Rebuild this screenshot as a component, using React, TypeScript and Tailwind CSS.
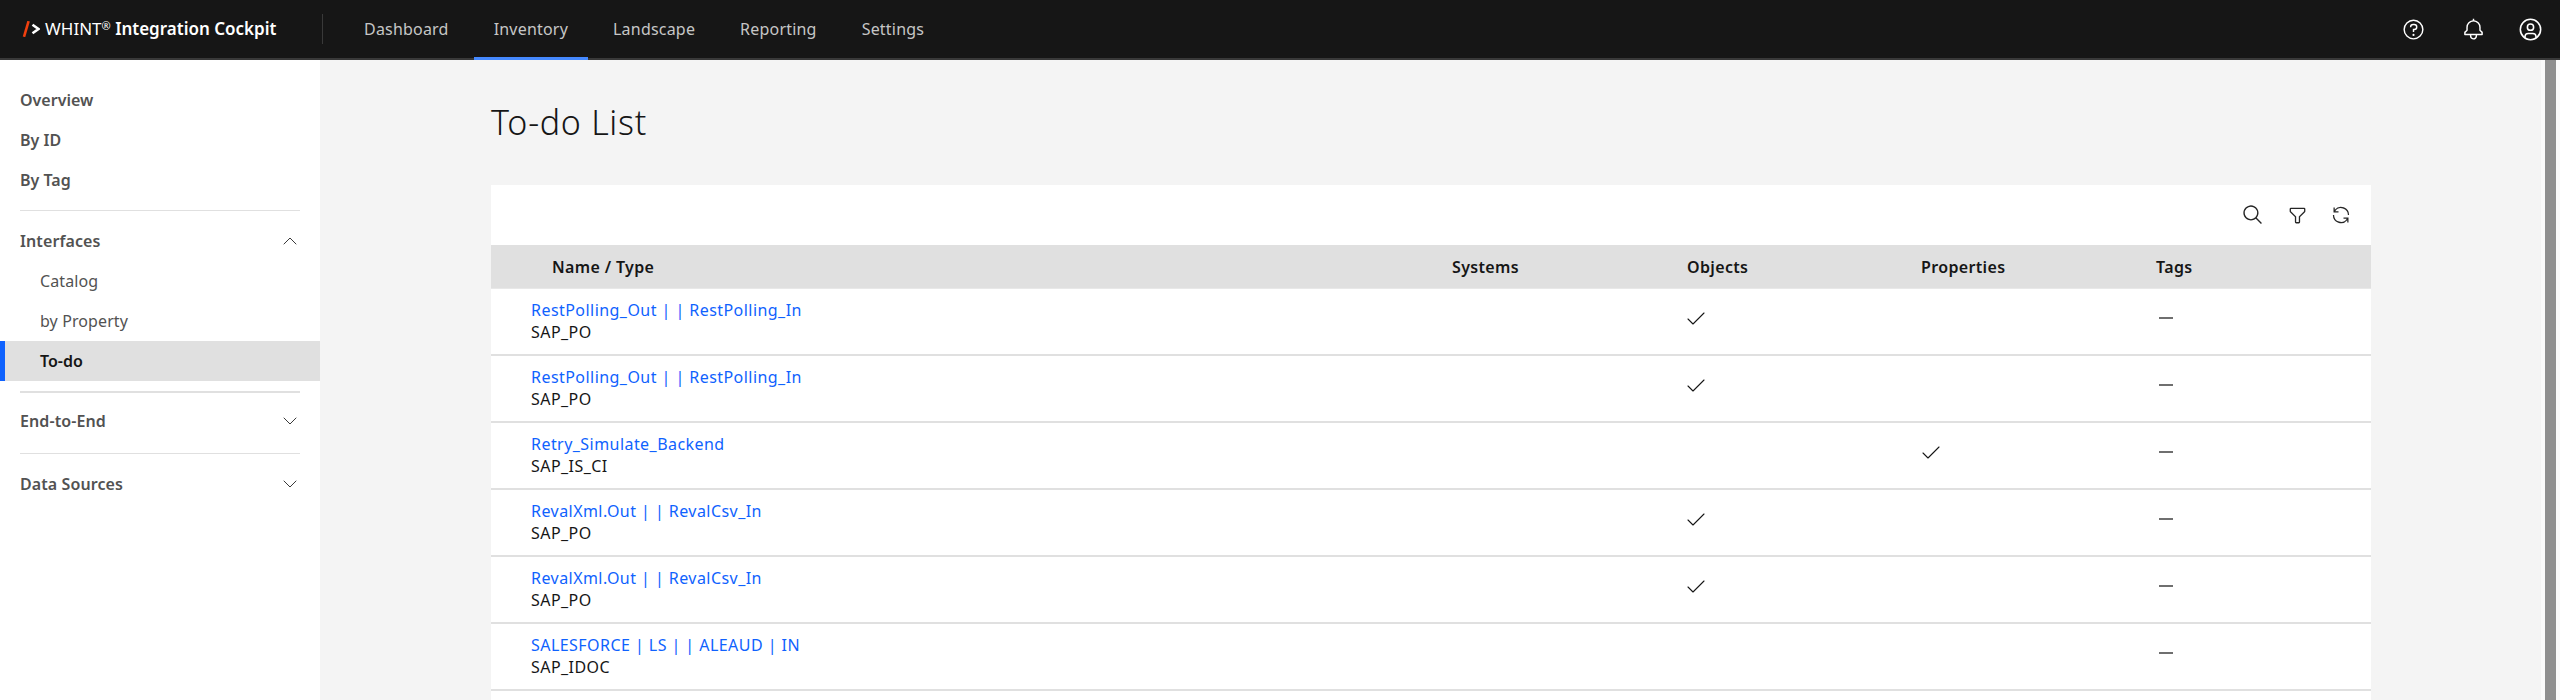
import { Check, ChevronDown, ChevronUp } from 'lucide-react';

const topNav = ['Dashboard', 'Inventory', 'Landscape', 'Reporting', 'Settings'];

const rows = [
  { name: 'RestPolling_Out | | RestPolling_In', type: 'SAP_PO', col: 'objects' },
  { name: 'RestPolling_Out | | RestPolling_In', type: 'SAP_PO', col: 'objects' },
  { name: 'Retry_Simulate_Backend', type: 'SAP_IS_CI', col: 'properties' },
  { name: 'RevalXml.Out | | RevalCsv_In', type: 'SAP_PO', col: 'objects' },
  { name: 'RevalXml.Out | | RevalCsv_In', type: 'SAP_PO', col: 'objects' },
  { name: 'SALESFORCE | LS | | ALEAUD | IN', type: 'SAP_IDOC', col: '' },
];

const gridCols = 'grid grid-cols-[961px_235px_234px_235px_1fr]';

function HelpIcon() {
  return (
    <svg width="23" height="23" viewBox="0 0 32 32" fill="#fff">
      <path d="M16,2A14,14,0,1,0,30,16,14,14,0,0,0,16,2Zm0,26A12,12,0,1,1,28,16,12,12,0,0,1,16,28Z" />
      <circle cx="16" cy="23.5" r="1.5" />
      <path d="M17,8H15.5A4.49,4.49,0,0,0,11,12.5V13h2v-.5A2.5,2.5,0,0,1,15.5,10H17a2.5,2.5,0,0,1,0,5H15v4.5h2V17a4.5,4.5,0,0,0,0-9Z" />
    </svg>
  );
}

function BellIcon() {
  return (
    <svg width="23" height="23" viewBox="0 0 32 32" fill="#fff">
      <path d="M28.7071,19.293,26,16.5859V13a10.0136,10.0136,0,0,0-9-9.9492V1H15V3.0508A10.0136,10.0136,0,0,0,6,13v3.5859L3.2929,19.293A1,1,0,0,0,3,20v3a1,1,0,0,0,1,1h7v.7768a5.152,5.152,0,0,0,4.5,5.1987A5.0057,5.0057,0,0,0,21,25V24h7a1,1,0,0,0,1-1V20A1,1,0,0,0,28.7071,19.293ZM19,25a3,3,0,0,1-6,0V24h6Zm8-3H5V20.4141L7.707,17.707A1,1,0,0,0,8,17V13a8,8,0,0,1,16,0v4a1,1,0,0,0,.293.707L27,20.4141Z" />
    </svg>
  );
}

function UserIcon() {
  return (
    <svg width="25" height="25" viewBox="0 0 32 32" fill="#fff">
      <path d="M16,8a5,5,0,1,0,5,5A5,5,0,0,0,16,8Zm0,8a3,3,0,1,1,3-3A3.0034,3.0034,0,0,1,16,16Z" />
      <path d="M16,2A14,14,0,1,0,30,16,14.0158,14.0158,0,0,0,16,2ZM10,26.3765V25a3.0033,3.0033,0,0,1,3-3h6a3.0033,3.0033,0,0,1,3,3v1.3765a11.8989,11.8989,0,0,1-12,0Zm13.9925-1.4507A5.0016,5.0016,0,0,0,19,20H13a5.0016,5.0016,0,0,0-4.9925,4.9258,12,12,0,1,1,15.985,0Z" />
    </svg>
  );
}

function SearchIcon() {
  return (
    <svg width="22" height="22" viewBox="0 0 32 32" fill="#262626">
      <path d="M29 27.5859l-7.5521-7.5521a11.0177 11.0177 0 1 0-1.4141 1.4141L27.5859 29ZM4 13a9 9 0 1 1 9 9A9.01 9.01 0 0 1 4 13Z" />
    </svg>
  );
}

function FilterIcon() {
  return (
    <svg width="21" height="21" viewBox="0 0 32 32" fill="#262626">
      <path d="M18,28H14a2,2,0,0,1-2-2V18.41L4.59,11A2,2,0,0,1,4,9.59V6A2,2,0,0,1,6,4H26a2,2,0,0,1,2,2V9.59A2,2,0,0,1,27.41,11L20,18.41V26A2,2,0,0,1,18,28ZM6,6V9.59l8,8V26h4V17.59l8-8V6Z" />
    </svg>
  );
}

function RefreshIcon() {
  return (
    <svg width="20" height="20" viewBox="0 0 32 32" fill="#262626">
      <path d="M12 10H6.78A11 11 0 0 1 27 16h2A13 13 0 0 0 6 7.68V4H4v8h8zM20 22h5.22A11 11 0 0 1 5 16H3a13 13 0 0 0 23 8.32V28h2v-8h-8z" />
    </svg>
  );
}

function SideHeading({ label, open }: { label: string; open?: boolean }) {
  const Icon = open ? ChevronUp : ChevronDown;
  return (
    <div className="flex h-10 items-center justify-between pl-5 pr-[18px] font-semibold tracking-[0.1px] text-[#525252]">
      <span>{label}</span>
      <Icon className="h-6 w-6 text-[#393939]" strokeWidth={1} />
    </div>
  );
}

export default function App() {
  return (
    <div className="flex h-[700px] w-[2560px] flex-col overflow-hidden bg-[#f4f4f4] text-base text-[#161616] [font-family:'Noto_Sans',sans-serif]">
      {/* Top bar */}
      <header className="flex h-[60px] shrink-0 items-center border-b-2 border-[#393939] bg-[#161616]">
        <div className="flex w-[322px] items-center pl-[22px] text-white">
          <svg width="18" height="16" viewBox="0 0 18 16" fill="none" strokeWidth="2.6">
            <path d="M6.6 .2L2 15.8" stroke="#f0400f" />
            <path d="M10.5 3.8l6 4.2-6 4.2" stroke="#fff" />
          </svg>
          <span className="ml-[5px] whitespace-nowrap text-[17px]">
            WHINT<sup className="text-[11px]">®</sup> <span className="font-semibold">Integration Cockpit</span>
          </span>
        </div>
        <div className="h-[30px] w-px bg-[#393939]" />
        <nav className="ml-[21px] flex h-full gap-[5px] tracking-[0.2px]">
          {topNav.map((item) => (
            <div
              key={item}
              className={`-mb-0.5 flex h-[60px] items-center border-b-[3px] px-5 text-[#c6c6c6] ${
                item === 'Inventory' ? 'border-[#4589ff]' : 'border-transparent'
              }`}
            >
              {item}
            </div>
          ))}
        </nav>
        <div className="ml-auto flex items-center pr-[17px]">
          <HelpIcon />
          <div className="ml-[37px]">
            <BellIcon />
          </div>
          <div className="ml-[33px]">
            <UserIcon />
          </div>
        </div>
      </header>

      <div className="flex min-h-0 flex-1">
        {/* Sidebar */}
        <aside className="w-[320px] shrink-0 bg-white pt-5">
          <div className="flex h-10 items-center pl-5 font-semibold text-[#525252]">Overview</div>
          <div className="flex h-10 items-center pl-5 font-semibold text-[#525252]">By ID</div>
          <div className="flex h-10 items-center pl-5 font-semibold text-[#525252]">By Tag</div>
          <div className="mx-5 mb-2.5 mt-2.5 h-px bg-[#e0e0e0]" />
          <SideHeading label="Interfaces" open />
          <div className="flex h-10 items-center pl-10 tracking-[0.1px] text-[#525252]">Catalog</div>
          <div className="flex h-10 items-center pl-10 tracking-[0.1px] text-[#525252]">by Property</div>
          <div className="flex h-10 items-center border-l-[5px] border-[#0f62fe] bg-[#e0e0e0] pl-[35px] font-semibold text-[#161616]">
            To-do
          </div>
          <div className="mx-5 mb-2 mt-2.5 h-0.5 bg-[#e0e0e0]" />
          <SideHeading label="End-to-End" open={false} />
          <div className="mx-5 mb-2.5 mt-3 h-px bg-[#e0e0e0]" />
          <SideHeading label="Data Sources" open={false} />
        </aside>

        {/* Main */}
        <main className="min-w-0 flex-1 pl-[171px] pr-[170px]">
          <h1 className="pb-[38px] pt-[38px] text-[34px] font-light leading-[49px] tracking-[0.7px] text-[#161616]">
            To-do List
          </h1>
          <div className="bg-white">
            <div className="flex h-[60px] items-center justify-end gap-[23px] pr-5">
              <SearchIcon />
              <FilterIcon />
              <RefreshIcon />
            </div>
            <div className={`${gridCols} h-[44px] items-center border-b border-[#e8e8e8] bg-[#e0e0e0] font-semibold tracking-[0.35px]`}>
              <div className="pl-[61px]">Name / Type</div>
              <div>Systems</div>
              <div>Objects</div>
              <div>Properties</div>
              <div>Tags</div>
            </div>
            {rows.map((row, i) => (
              <div key={i} className={`${gridCols} h-[67px] border-b-2 border-[#e0e0e0]`}>
                <div className="pl-10 pt-[11px] leading-[21.5px] tracking-[0.45px]">
                  <div className="text-[#0f62fe]">{row.name}</div>
                  <div>{row.type}</div>
                </div>
                <div />
                <div className="-ml-[3px] pt-[18px]">
                  {row.col === 'objects' && <Check className="h-6 w-6 text-[#161616]" strokeWidth={1.1} />}
                </div>
                <div className="-ml-[2px] pt-[18px]">
                  {row.col === 'properties' && <Check className="h-6 w-6 text-[#161616]" strokeWidth={1.1} />}
                </div>
                <div className="pt-[28px]">
                  <div className="ml-[3px] h-0.5 w-[14px] bg-[#6f6f6f]" />
                </div>
              </div>
            ))}
            <div className="h-[80px]" />
          </div>
        </main>

        {/* Scrollbar */}
        <div className="w-[19px] shrink-0 bg-[#fafafa] pl-1 pr-1">
          <div className="h-full w-[11px] bg-[#8f8f8f]" />
        </div>
      </div>
    </div>
  );
}
